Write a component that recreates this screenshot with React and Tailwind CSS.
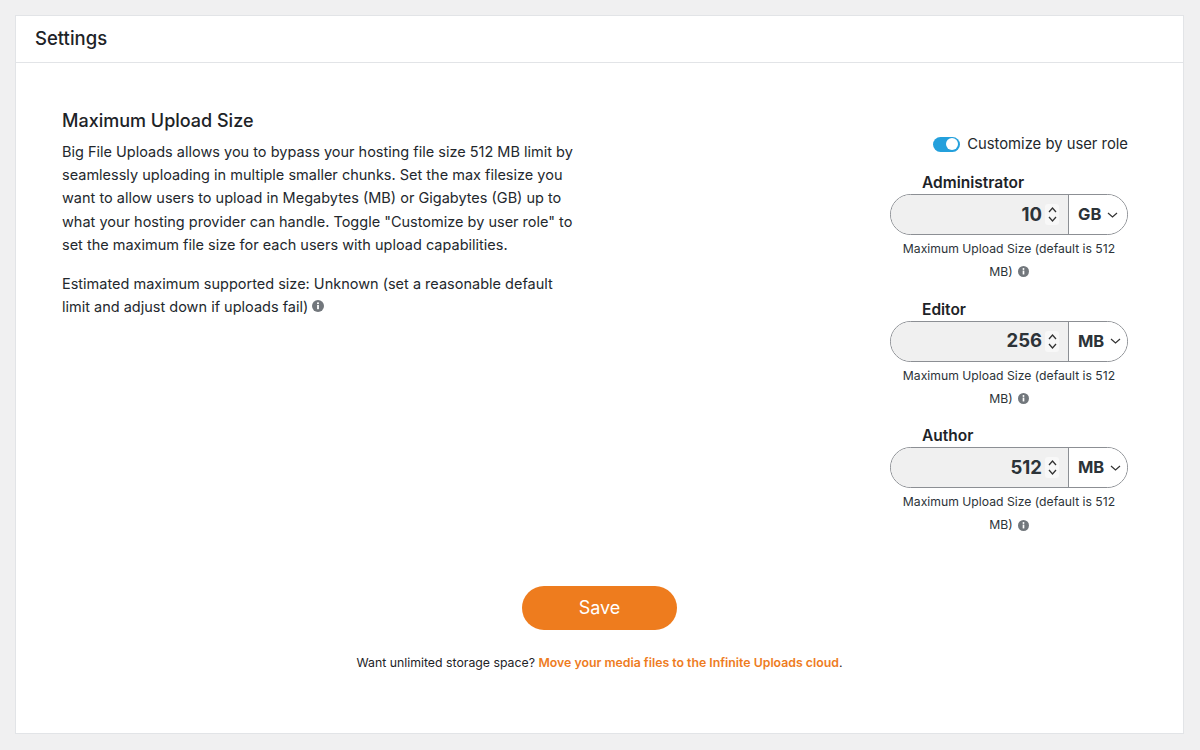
import { useState } from "react";

const FONT = "font-['Inter','Liberation_Sans',sans-serif]";

function InfoIcon({ className }) {
  return (
    <svg viewBox="0 0 12 12" className={className}>
      <circle cx="6" cy="6" r="6" fill="#72777c" />
      <rect x="5.1" y="5" width="1.8" height="4.2" fill="#fff" />
      <circle cx="6" cy="3.3" r="1.05" fill="#fff" />
    </svg>
  );
}

// the little up/down arrows of a number input
function Spinner() {
  return (
    <div className="flex h-[21px] w-[14px] flex-col items-center justify-center gap-[3px] rounded-[3px] bg-[#f8f8f8]">
      <svg viewBox="0 0 9 6" className="h-[6px] w-[9px]" fill="none" stroke="#333" strokeWidth="1.3">
        <path d="M1 5 L4.5 1 L8 5" />
      </svg>
      <svg viewBox="0 0 9 6" className="h-[6px] w-[9px]" fill="none" stroke="#333" strokeWidth="1.3">
        <path d="M1 1 L4.5 5 L8 1" />
      </svg>
    </div>
  );
}

function RoleField({ role, value, unit }) {
  return (
    <div className="flex w-[238px] flex-col">
      <div className="pl-[32px] text-[15.5px] font-semibold leading-[20px] text-[#1d2327]">{role}</div>
      <div className="mt-[1px] flex h-[41px] overflow-hidden rounded-full border border-[#8c8f94]">
        <div className="flex w-[177px] items-center justify-end gap-[3px] bg-[#f0f0f0] pr-[9px]">
          <span className="text-[18.5px] font-bold text-[#2c3338]">{value}</span>
          <Spinner />
        </div>
        <div className="flex flex-1 items-center border-l border-[#8c8f94] bg-white pl-[9px]">
          <span className="text-[16.5px] font-bold text-[#2c3338]">{unit}</span>
          <svg viewBox="0 0 11 6" className="ml-[6px] h-[6px] w-[11px]" fill="none" stroke="#333" strokeWidth="1.2">
            <path d="M1 1 L5.5 5 L10 1" />
          </svg>
        </div>
      </div>
      <div className="mt-[2px] text-center text-[12.2px] leading-[23.3px] text-[#2c3338]">
        <div>Maximum Upload Size (default is 512</div>
        <div className="flex items-center justify-center gap-[5px]">
          MB) <InfoIcon className="h-[11px] w-[11px]" />
        </div>
      </div>
    </div>
  );
}

export default function App() {
  const [customize, setCustomize] = useState(true);

  return (
    <div className={`${FONT} h-[750px] w-[1200px] overflow-hidden bg-[#f0f0f1] p-[15px]`}>
      <div className="flex h-[719px] w-[1169px] flex-col border border-[#e2e4e7] bg-white">
        <div className="flex h-[47px] shrink-0 items-center border-b border-[#e2e4e7] pb-[1px] pl-[19px] text-[18.5px] font-medium text-[#1d2327]">
          Settings
        </div>

        <div className="flex flex-1 flex-col">
          <div className="flex justify-between pl-[46px] pr-[55px]">
            {/* Description */}
            <div className="w-[516px] pt-[46px] text-[14.5px] leading-[23.2px] text-[#23282d]">
              <h2 className="mb-[7px] text-[18px] font-medium leading-[24px] text-[#1d2327]">Maximum Upload Size</h2>
              <p>
                Big File Uploads allows you to bypass your hosting file size 512 MB limit by seamlessly uploading in
                multiple smaller chunks. Set the max filesize you want to allow users to upload in Megabytes (MB) or
                Gigabytes (GB) up to what your hosting provider can handle. Toggle "Customize by user role" to set the
                maximum file size for each users with upload capabilities.
              </p>
              <p className="mt-[16px]">
                Estimated maximum supported size: Unknown (set a reasonable default limit and adjust down if uploads
                fail) <InfoIcon className="mb-[5px] inline h-[12px] w-[12px]" />
              </p>
            </div>

            {/* Role limits */}
            <div className="flex flex-col items-end pt-[71px]">
              <div className="mb-[19px] flex items-center gap-[7px]">
                <button
                  onClick={() => setCustomize(!customize)}
                  className={`flex h-[15px] w-[27px] items-center rounded-full px-[2px] ${customize ? "justify-end bg-[#24a0dc]" : "justify-start bg-[#aaa]"}`}
                >
                  <span className="h-[12px] w-[12px] rounded-full bg-white" />
                </button>
                <span className="text-[14.8px] leading-[20px] text-[#23282d]">Customize by user role</span>
              </div>
              <div className="flex flex-col gap-[16px]">
                <RoleField role="Administrator" value="10" unit="GB" />
                <RoleField role="Editor" value="256" unit="MB" />
                <RoleField role="Author" value="512" unit="MB" />
              </div>
            </div>
          </div>

          <div className="mt-[49px] flex flex-col items-center">
            <button className="h-[44px] w-[155px] rounded-full bg-[#ee7c1e] text-[18px] text-white">
              Save
            </button>
            <p className="mt-[25px] text-[12.3px] leading-[16px] text-[#1d2327]">
              Want unlimited storage space?{" "}
              <a href="#" className="font-semibold text-[#ee7c1e]">
                Move your media files to the Infinite Uploads cloud
              </a>
              .
            </p>
          </div>
        </div>
      </div>
    </div>
  );
}
